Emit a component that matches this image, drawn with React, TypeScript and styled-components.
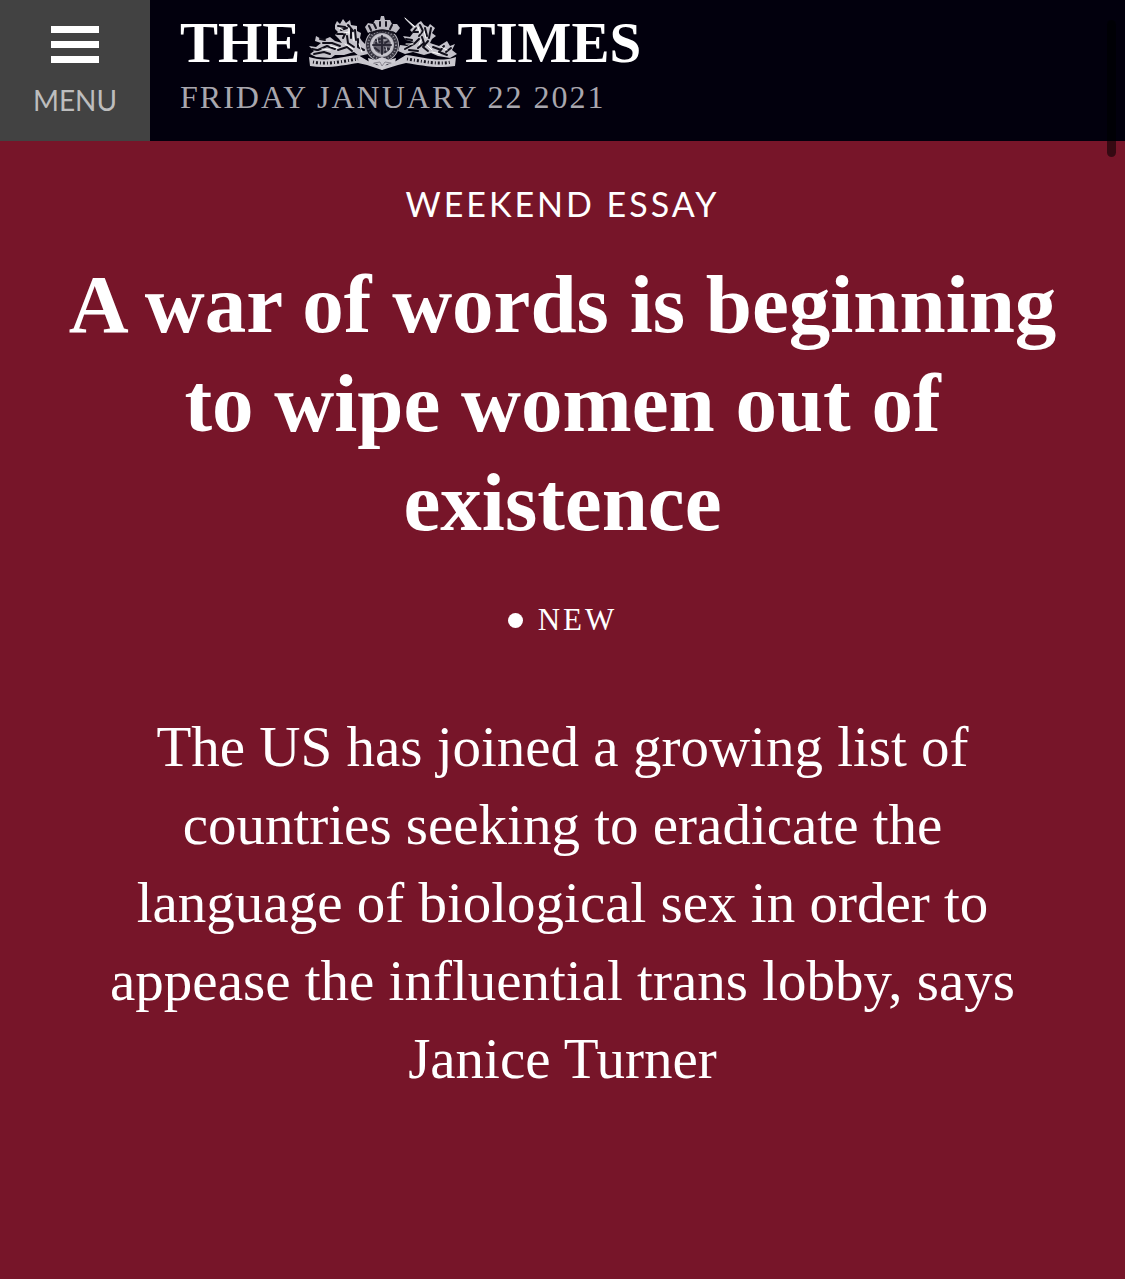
import React from "react";
import styled, { createGlobalStyle } from "styled-components";

const serif = '"Liberation Serif", "Times New Roman", serif';
const sans = 'Lato, "Gill Sans", sans-serif';

const GlobalStyle = createGlobalStyle`
  *, *::before, *::after { box-sizing: border-box; }
  html { background: #771529; }
  body { margin: 0; }
`;

const Page = styled.div`
  position: relative;
  min-height: 100vh;
  display: flex;
  flex-direction: column;
  background: #771529;
  color: #fff;
  font-family: ${serif};
`;

const Header = styled.header`
  display: flex;
  align-items: stretch;
  background: #02000d;
`;

const MenuButton = styled.button`
  flex: none;
  display: flex;
  flex-direction: column;
  align-items: center;
  gap: 20px;
  width: 150px;
  padding: 26px 0 24px;
  border: 0;
  background: #424242;
  color: #bdbdbd;
  font: 400 28px/34px ${sans};
  cursor: pointer;
`;

const Bars = styled.span`
  display: grid;
  gap: 8px;
  width: 48px;
`;

const Bar = styled.span`
  height: 7px;
  background: #fff;
`;

const Masthead = styled.div`
  display: flex;
  flex-direction: column;
  padding: 14px 30px 0;
`;

const Logo = styled.a`
  display: flex;
  align-items: center;
  color: #fff;
  text-decoration: none;
  font: 700 57px/58px ${serif};
`;

const CrestArt = styled.svg`
  flex: none;
  margin-left: 8px;
`;

const Dateline = styled.time`
  margin-top: 6px;
  color: #a9a7ae;
  font: 400 32px/38px ${serif};
  letter-spacing: 2px;
`;

const Article = styled.main`
  display: flex;
  flex-direction: column;
  align-items: center;
  padding: 42px 60px 0;
  text-align: center;
`;

const Kicker = styled.p`
  margin: 0;
  font: 400 34px/42px ${sans};
  letter-spacing: 3px;
`;

const Headline = styled.h1`
  margin: 30px 0 0;
  font: 700 83px/99px ${serif};
`;

const Flag = styled.p`
  display: flex;
  align-items: center;
  gap: 15px;
  margin: 50px 0 0;
  font: 400 31px/36px ${serif};
  letter-spacing: 3px;
`;

const Dot = styled.span`
  width: 15px;
  height: 15px;
  border-radius: 50%;
  background: #fff;
`;

const Standfirst = styled.p`
  max-width: 930px;
  margin: 70px 0 0;
  font: 400 57px/78px ${serif};
`;

const ScrollThumb = styled.div`
  position: absolute;
  top: 20px;
  right: 9px;
  width: 9px;
  height: 137px;
  border-radius: 5px;
  background: rgba(0, 0, 0, 0.55);
`;

function Crest() {
  return (
    <CrestArt width="149" height="55" viewBox="0 0 149 55" fill="none" strokeLinecap="round" strokeLinejoin="round" aria-hidden="true">
      {/* motto ribbon */}
      <path d="M1 41C18 47 34 40 50 39L60 45L74 51L88 45L98 39C115 41 131 47 148 41L147 50C130 53 111 49 98 47L90 49L74 54L59 49L50 47C37 49 18 53 2 50Z" fill="#c9c7ce" />
      <path d="M5 46C20 49 36 45 50 43M99 43C114 45 130 49 143 46" stroke="#17151f" strokeWidth="3" strokeDasharray="1 2 2 2" strokeLinecap="butt" />
      {/* lion */}
      <path d="M27 9L29 5L32 8L35 3L38 7L42 4L43 9L49 10L49 15L53 17L52 22L54 25L58 29L60 38L51 40L46 36L36 39L27 39L23 42L8 41L2 38L6 35L1 30L8 31L13 27L7 25L8 20L15 24L22 21L27 25L34 27L31 23L27 19L30 16L27 13Z" fill="#c4c2ca" />
      <path d="M30 10L37 11M33 14L39 12M29 18L37 18L35 22M40 9L45 15M43 13L43 22M47 14L48 24M39 20L40 27L46 31M50 23L50 31L56 34M15 27L24 27L32 30M10 34L19 30L27 33M6 38L16 36L22 38M30 34L39 31L44 35M12 23L17 24M4 33L9 34" stroke="#100e19" strokeWidth="2" />
      <path d="M31 12L35 14M36 17L41 16M41 12L41 18M45 17L46 25M22 30L30 32M14 33L22 34M37 28L45 33M51 28L54 36" stroke="#fff" />
      {/* unicorn */}
      <path d="M96 2L107 10L110 7L113 5L116 9L120 11L122 8L127 12L124 17L128 20L124 23L122 27L131 30L139 25L142 30L147 28L144 34L149 38L142 42L130 40L123 37L116 39L105 36L97 38L90 35L92 29L99 30L106 26L98 24L95 20L102 21L105 17L102 14L105 11Z" fill="#c4c2ca" />
      <path d="M108 12L105 16L110 16M112 9L115 15L111 20M117 12L119 20M123 12L121 22M111 23L106 28L97 33M114 21L116 27L110 32M120 25L115 31L120 35M125 31L133 34M136 30L131 36L139 39M143 32L138 36M98 23L104 24M101 34L110 35" stroke="#100e19" strokeWidth="2" />
      <path d="M97 2L107 11M110 11L112 17M116 15L118 22M113 24L111 29M119 29L124 34M133 31L139 34M98 28L105 28M124 36L132 38" stroke="#fff" />
      {/* royal arms inside the garter */}
      <circle cx="74" cy="29" r="17" fill="#b5b3bb" />
      <circle cx="74" cy="29" r="14" stroke="#35333e" strokeWidth="4" />
      <circle cx="74" cy="29" r="14" stroke="#8f8d97" strokeWidth="2" strokeDasharray="1 2" strokeLinecap="butt" />
      <circle cx="74" cy="29" r="10" fill="#686570" stroke="#c9c7ce" strokeWidth="2" />
      <path d="M74 20V38M65 29H83M68 24L72 23M68 27L72 26M76 22L80 25L77 27M67 32L71 35M77 32L81 33L77 36" stroke="#2a2834" strokeWidth="2" />
      <path d="M69 22L70 27M78 31L79 35M76 24H79" stroke="#d4d3d9" />
      {/* crown */}
      <path d="M60 17L57 11L60 7L65 8L67 4L72 4L73 0L76 0L77 4L82 4L84 8L89 8L92 12L88 17C79 12 69 12 60 17Z" fill="#bcbac2" />
      <path d="M61 10L63 14M66 8L68 12M72 6V10M78 6V10M84 9L82 13M63 17C70 14 79 14 86 17" stroke="#16141f" strokeWidth="2" />
      <path d="M60 42L67 44L74 41L81 44L88 42L87 47L79 48L74 54L69 48L61 47Z" fill="#cfcdd4" />
      <path d="M66 47L72 46L74 50L77 46L83 47" stroke="#8b8892" />
    </CrestArt>
  );
}

export default function App() {
  return (
    <Page>
      <GlobalStyle />
      <Header>
        <MenuButton type="button">
          <Bars aria-hidden="true">
            <Bar />
            <Bar />
            <Bar />
          </Bars>
          MENU
        </MenuButton>
        <Masthead>
          <Logo href="#" aria-label="The Times">
            <span>THE</span>
            <Crest />
            <span>TIMES</span>
          </Logo>
          <Dateline dateTime="2021-01-22">FRIDAY JANUARY 22 2021</Dateline>
        </Masthead>
      </Header>
      <Article>
        <Kicker>WEEKEND ESSAY</Kicker>
        <Headline>A war of words is beginning to wipe women out of existence</Headline>
        <Flag>
          <Dot />
          NEW
        </Flag>
        <Standfirst>
          The US has joined a growing list of countries seeking to eradicate the language of
          biological sex in order to appease the influential trans lobby, says Janice Turner
        </Standfirst>
      </Article>
      <ScrollThumb />
    </Page>
  );
}
